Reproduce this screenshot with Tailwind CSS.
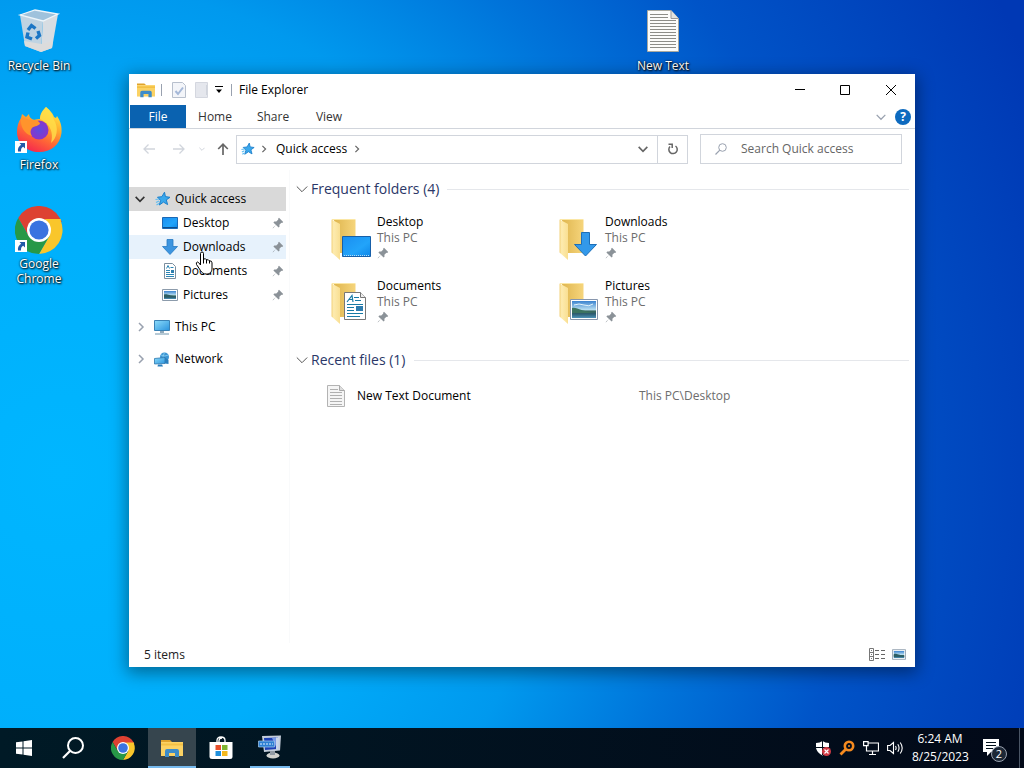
<!DOCTYPE html>
<html lang="en">
<head>
    <meta charset="UTF-8">
    <meta name="viewport" content="width=device-width, initial-scale=1.0">
    <title>File Explorer</title>
    <script src="https://cdn.jsdelivr.net/npm/@tailwindcss/browser@4"></script>
</head>
<body class="h-screen flex flex-col overflow-hidden cursor-default select-none font-['Open_Sans','Noto_Sans',sans-serif] text-[12px] leading-4 text-black">

    <!-- Shared icons -->
    <svg class="absolute size-0" aria-hidden="true">
        <defs>
            <linearGradient id="g-screen" x1="0" y1="0" x2="1" y2="1"><stop offset="0" stop-color="#1a8ef0"/><stop offset=".6" stop-color="#22a4fa"/><stop offset="1" stop-color="#0d86e8"/></linearGradient>
            <linearGradient id="g-monitor" x1="0" y1="0" x2="1" y2="1"><stop offset="0" stop-color="#8ddcfb"/><stop offset="1" stop-color="#2a93dd"/></linearGradient>
            <linearGradient id="g-flap" x1="0" x2="1"><stop offset="0" stop-color="#f3d27c"/><stop offset=".25" stop-color="#fdebaf"/><stop offset="1" stop-color="#f9df92"/></linearGradient>
            <linearGradient id="g-back" x1="0" x2="1"><stop offset="0" stop-color="#dfb64f"/><stop offset="1" stop-color="#f6d57c"/></linearGradient>
            <linearGradient id="g-sky" x1="0" y1="0" x2="0" y2="1"><stop offset="0" stop-color="#3b83cf"/><stop offset=".5" stop-color="#b5dcf0"/><stop offset=".6" stop-color="#3d6b5e"/><stop offset=".75" stop-color="#2c5b70"/><stop offset="1" stop-color="#4d93b8"/></linearGradient>
            <linearGradient id="g-fox" x1=".8" y1="0" x2=".3" y2="1"><stop offset="0" stop-color="#fff14a"/><stop offset=".35" stop-color="#ffb02e"/><stop offset=".65" stop-color="#ff6a35"/><stop offset="1" stop-color="#f5264f"/></linearGradient>
            <radialGradient id="g-globe"><stop offset="0" stop-color="#5d4be0"/><stop offset="1" stop-color="#8a35c9"/></radialGradient>
        </defs>
        <symbol id="chrome" viewBox="0 0 48 48">
            <path fill="#dd4132" d="M3.2 12A24 24 0 0 1 44.8 12L46.8 16H24L13.6 30Z"/>
            <path fill="#f9c62b" d="M45.8 15A24 24 0 0 1 24 48L34.4 30L30 13H45.8Z"/>
            <path fill="#279847" d="M24 48A24 24 0 0 1 3.2 12L13.6 30L24 35L34.4 30Z"/>
            <circle cx="24" cy="24" r="12" fill="#fff"/>
            <circle cx="24" cy="24" r="9.6" fill="#3a73e0"/>
        </symbol>
        <symbol id="shortcut" viewBox="0 0 12 12">
            <path fill="#fff" d="M0 0h12v12H0z"/>
            <path fill="#2359a8" d="M4.5 2h5.5v5.5L8.2 5.7C6.5 6.7 5.800 8 6 10.5H3C2.5 7.5 3.800 5.2 6.2 3.800Z"/>
        </symbol>
        <symbol id="star" viewBox="0 0 16 16">
            <path fill="#3aa8ec" stroke="#1c7fcb" d="M9.5 1.2 10.4 5.6 15 6.3 11.3 8.9 12.6 13.6 8.5 11.1 4.3 14 5.6 9.4 2.5 6.2 6.9 5.7Z"/>
            <path stroke="#5fbdf2" stroke-width="1.2" d="M.5 8.5 4 8M1 11.5l3-1.5M1.5 14 4 12.5"/>
        </symbol>
        <symbol id="pin" viewBox="0 0 12 12">
            <path fill="#8b9298" d="M7 .8 11.2 5l-1 .9-.8-.2-2 2 .1 2-.9.9L4 8 1.3 10.9.6 11.4l.5-.8L4 8 1.4 5.4l.9-.9 2 .1 2-2-.2-.9Z"/>
        </symbol>
        <symbol id="chev-down" viewBox="0 0 12 12"><path fill="none" stroke="currentColor" stroke-width="var(--w,1)" d="M.8 3.5 6 8.7l5.2-5.2"/></symbol>
        <symbol id="chev-right" viewBox="0 0 8 10"><path fill="none" stroke="currentColor" stroke-width="1.5" d="M2 1l4 4-4 4"/></symbol>
        <symbol id="desktop" viewBox="0 0 16 12">
            <path fill="url(#g-screen)" stroke="#1b68b5" d="M.5.5h15v11H.5z"/>
            <path stroke="#0c4d8a" d="M1 10.5h14"/>
        </symbol>
        <symbol id="down" viewBox="0 0 16 16"><path fill="#3d95e0" stroke="#2678c2" stroke-width=".8" d="M5 .5h6v7h4.5L8 15.5.5 7.5H5Z"/></symbol>
        <symbol id="doc" viewBox="0 0 14 16">
            <path fill="#fff" stroke="#7b8e9e" d="M1.5.5h8l3 3v12h-11z"/>
            <path fill="none" stroke="#2c86b5" d="M3.500 5.500 5 2.500l1.500 3M7.500 4.500h3M3 7.500h4M3 9.500h4M3 11.500h8M3 13.500h8"/>
            <path fill="#2f7fae" d="M8 7h3v3H8z"/>
        </symbol>
        <symbol id="picture" viewBox="0 0 16 12">
            <path fill="#fff" stroke="#8c9bab" d="M.5.5h15v11H.5z"/>
            <path fill="url(#g-sky)" d="M2 2h12v8H2z"/>
            <path fill="#2d5f64" d="M2 5.5c3-1 5 1 12 2V8.5H2z"/>
        </symbol>
        <symbol id="monitor" viewBox="0 0 16 15">
            <path fill="url(#g-monitor)" stroke="#3a82b5" d="M.5.5h15v10H.5z"/>
            <path fill="#8fa9bb" d="M6 11h4v2H6z"/><path stroke="#6f95ad" d="M1 14h14"/>
        </symbol>
        <symbol id="network" viewBox="0 0 16 15">
            <circle cx="10.5" cy="5" r="4.5" fill="#3c95d3"/>
            <path fill="none" stroke="#8dd2f2" stroke-width=".8" d="M7 3q4 2 7.5 0M10.5.5q-3 4 0 8"/>
            <path fill="url(#g-monitor)" stroke="#2d77ad" stroke-width=".8" d="M.5 6.5 11 5.5v6L.5 12Z"/>
            <path fill="#2b7fbd" d="M11 5.5 14.5 8v4L11 11.5ZM4 12.5h4l1 2H3.5Z"/>
        </symbol>
        <symbol id="folder-open" viewBox="0 0 28 42">
            <path fill="url(#g-back)" d="M4 2h21.5v33H8z"/>
            <path fill="url(#g-flap)" d="M1.5 1.5 10 6v36L1.5 34.5Z"/>
            <path fill="none" stroke="#fbe7a5" d="M2 1.5h23.5"/>
        </symbol>
        <symbol id="explorer" viewBox="0 0 22 18">
            <path fill="#e0a32c" d="M0 1h9l2 2H0z"/>
            <path fill="#fbd264" d="M0 3h22v14H0z"/>
            <path fill="#f3c044" d="M0 4.5h22v2H0z"/>
            <path fill="#3d8cc9" d="M4 18v-6q0-2 2-2h10q2 0 2 2v6h-4v-4H8v4z"/>
        </symbol>
        <symbol id="text-file" viewBox="0 0 18 22">
            <path fill="#f5f5f5" stroke="#b3b3b3" d="M.5.5h12l5 5v16H.5z"/>
            <path fill="#ddd" stroke="#a8a8a8" d="M12.5.5v5h5"/>
            <path stroke="#b0b0b0" d="M3 4.5h8M3 7.5h12M3 10.5h12M3 13.5h12M3 16.5h12M3 19.5h12"/>
        </symbol>
    </svg>

    <!-- Desktop -->
    <main class="relative flex-1 bg-[radial-gradient(circle_at_6%_65%,#00b6ff_0,#00aefb_300px,#0099ee_490px,#0074da_640px,#0054c8_790px,#0038b4_1050px)]">
        <ul class="w-[78px] pt-2 text-center leading-[15px] text-white [text-shadow:1px_1px_2px_#000,0_0_2px_#000]">
            <li class="h-[99px]">
                <svg class="mx-auto size-12" viewBox="0 0 48 48">
                    <path fill="#9fc2dc" d="M5 7 20 2 43 6 28 14Z"/>
                    <path fill="#bfd3e2" d="m5 7 23 6-2 31-16-6Z"/>
                    <path fill="#d8dde2" d="M28 13 43 6l-6 34-11 4Z"/>
                    <path fill="#dcdcdc" d="m9 33 17 3v8l-16-6zM26 36l12-3-1 7-11 4z"/>
                    <path fill="none" stroke="#edf5fa" stroke-width="1.3" d="M5 7 20 2l23 4-15 7Z"/>
                    <path fill="none" stroke="#1b76c5" stroke-width="3.4" d="m13 22 3.5-4.5 4 3M23 23l1.500 4.500-3.500 3M17 31l-5-2 1-4.500"/>
                </svg>
                <p class="mt-0.5">Recycle Bin</p>
            </li>
            <li class="h-[99px]">
                <div class="relative mx-auto size-12">
                    <svg class="size-12" viewBox="0 0 48 48">
                        <path fill="url(#g-fox)" d="M31 0c5 4 7 7 8 10l2 1 1-2c4 6 5 11 4.500 17C45 38 36 45 24 45S2 37 2 25c0-5 1-10 4-14l1-4 4 3 3-3c0 3 2 5 5 6 2-1 4-1 6-1C25 7 28 3 31 0Z"/>
                        <path fill="#ffe04a" opacity=".8" d="M31 0c5 5 7 9 8 13 5 8 3 18-3 23 2-7 1-15-5-20-2-2-4-3-6-4 0-5 3-9 6-12Z"/>
                        <circle cx="24" cy="23" r="9.5" fill="url(#g-globe)"/>
                        <path fill="#ff942c" d="M6 11c4 0 7 2 10 2 4-1 7 0 9 3 0 3-6 3-8 5-2 3-2 5 0 8C9 27 5 19 6 11Z"/>
                    </svg>
                    <svg class="absolute left-0 bottom-0.5 size-3"><use href="#shortcut"/></svg>
                </div>
                <p class="mt-0.5">Firefox</p>
            </li>
            <li>
                <div class="relative mx-auto size-12">
                    <svg class="size-12"><use href="#chrome"/></svg>
                    <svg class="absolute left-0 bottom-0.5 size-3"><use href="#shortcut"/></svg>
                </div>
                <p class="mt-0.5">Google<br>Chrome</p>
            </li>
        </ul>

        <div class="absolute left-[625px] top-2 w-[76px] text-center leading-[15px] text-white [text-shadow:1px_1px_2px_#000,0_0_2px_#000]">
            <svg class="mx-auto size-12" viewBox="0 0 48 48">
                <path fill="#fcfcfa" stroke="#a9a9a0" d="M8.500 2.500H32l7.500 8v33h-31z"/>
                <path fill="#e3e3de" stroke="#999" d="M32 2.500v8h7.500"/>
                <path stroke="#8d8d88" d="M11 6.500h18M11 9.500h18M11 12.500h26M11 15.500h26M11 18.500h26M11 21.500h26M11 24.500h26M11 27.500h26M11 30.500h26M11 33.500h26M11 36.500h26M11 39.500h26"/>
            </svg>
            <p class="mt-0.5">New Text</p>
        </div>

        <!-- Explorer window -->
        <section class="absolute left-[129px] right-[109px] top-[74px] bottom-[61px] flex flex-col bg-white shadow-[0_4px_16px_2px_rgba(0,0,0,0.4)]">
            <header class="flex h-[31px] items-center pl-2">
                <svg class="h-4 w-[18px]"><use href="#explorer"/></svg>
                <span class="ml-1.5 h-3 w-px bg-gray-400"></span>
                <button class="ml-2.5" aria-label="Properties">
                    <svg class="h-4 w-3.5" viewBox="0 0 14 16"><path fill="#f3f5f9" stroke="#b8c0cd" d="M.5.5h10l3 3v12H.5z"/><path fill="none" stroke="#a5b8d8" stroke-width="2" d="m3.500 9 2.500 3L11 5.500"/></svg>
                </button>
                <button class="ml-2" aria-label="New folder">
                    <svg class="h-4 w-4" viewBox="0 0 16 16"><path fill="#e5e7ed" stroke="#d4d7df" d="M1.500.5h12v15h-12z"/><path stroke="#d0d4dc" d="M12.500 3v10"/></svg>
                </button>
                <button class="ml-[5px]" aria-label="Customize toolbar">
                    <svg class="h-2 w-2" viewBox="0 0 8 8"><path d="M0 0h8v1H0zM1 3.500h6L4 7Z"/></svg>
                </button>
                <span class="ml-2 h-3 w-px bg-gray-400"></span>
                <h1 class="ml-[7px] flex-1">File Explorer</h1>
                <button class="flex h-full w-[45px] items-center justify-center" aria-label="Minimize"><svg class="size-[10px]" viewBox="0 0 10 10"><path stroke="#000" d="M0 4.500h10"/></svg></button>
                <button class="flex h-full w-[45px] items-center justify-center" aria-label="Maximize"><svg class="size-[10px]" viewBox="0 0 10 10"><path fill="none" stroke="#000" d="M.5.5h9v9h-9z"/></svg></button>
                <button class="flex h-full w-[48px] items-center justify-center" aria-label="Close"><svg class="size-[10px]" viewBox="0 0 10 10"><path stroke="#000" d="m0 0 10 10M10 0 0 10"/></svg></button>
            </header>

            <nav class="flex h-6 items-stretch border-b border-gray-300 pl-px text-[#333]">
                <button class="w-14 bg-[#0a62b0] text-white">File</button>
                <button class="w-[58px]">Home</button>
                <button class="w-[58px]">Share</button>
                <button class="w-[54px]">View</button>
                <button class="ml-auto text-gray-400" aria-label="Expand the ribbon"><svg class="h-3 w-2.5 [--w:1.5]"><use href="#chev-down"/></svg></button>
                <button class="mx-1 ml-[9px] self-center size-4 rounded-full bg-[#0d6abf] text-[12px] font-bold leading-4 text-white" aria-label="Help">?</button>
            </nav>

            <!-- Address bar -->
            <div class="flex h-[41px] items-center pr-[13px] pb-px">
                <button class="ml-[14px] text-gray-300" aria-label="Back"><svg class="size-3" viewBox="0 0 12 12"><path fill="none" stroke="currentColor" stroke-width="1.3" d="M12 6H1M5.500 1.500 1 6l4.500 4.500"/></svg></button>
                <button class="ml-[18px] text-gray-300" aria-label="Forward"><svg class="size-3" viewBox="0 0 12 12"><path fill="none" stroke="currentColor" stroke-width="1.3" d="M0 6h11M6.500 1.500 11 6l-4.500 4.500"/></svg></button>
                <button class="ml-[14px] text-gray-300" aria-label="Recent locations"><svg class="size-1.5 [--w:2]"><use href="#chev-down"/></svg></button>
                <button class="ml-3 text-[#666]" aria-label="Up"><svg class="size-3" viewBox="0 0 12 12"><path fill="none" stroke="currentColor" stroke-width="1.7" d="M6 12V1M1.200 6 6 1.200 10.800 6"/></svg></button>
                <div class="ml-[7px] flex h-[29px] min-w-0 flex-1 items-center border border-gray-300">
                    <svg class="ml-[3px] h-3.5 w-4"><use href="#star"/></svg>
                    <svg class="ml-1 h-2 w-2 text-[#666]"><use href="#chev-right"/></svg>
                    <button class="ml-2">Quick access</button>
                    <svg class="ml-1.5 h-2 w-2 text-[#666]"><use href="#chev-right"/></svg>
                    <button class="ml-auto mr-[9px] text-[#666]" aria-label="Previous locations"><svg class="size-2.5 [--w:2]"><use href="#chev-down"/></svg></button>
                    <button class="flex h-full w-[30px] items-center justify-center border-l border-gray-300 text-[#666]" aria-label="Refresh">
                        <svg class="size-3" viewBox="0 0 12 12"><path fill="none" stroke="currentColor" stroke-width="1.5" d="M3 3.500A4.200 4.200 0 1 0 8.500 3M1.500 1.200h3.700v3.700"/></svg>
                    </button>
                </div>
                <div class="ml-3 flex h-[30px] w-[202px] items-center border border-gray-300">
                    <svg class="ml-[14px] size-3 text-gray-400" viewBox="0 0 12 12"><circle cx="7.500" cy="4.500" r="3.800" fill="none" stroke="currentColor"/><path stroke="currentColor" stroke-width="1.2" d="M4.800 7.200.5 11.500"/></svg>
                    <input type="search" aria-label="Search Quick access" placeholder="Search Quick access" class="ml-3.5 min-w-0 flex-1 bg-transparent outline-none placeholder:text-[#666]">
                </div>
            </div>

            <div class="flex min-h-0 flex-1">
                <!-- Folder tree -->
                <aside class="w-[161px] shrink-0 pt-[17px] border-r border-gray-50">
                    <a href="#" class="flex h-6 w-[157px] items-center bg-[#d9d9d9] pl-1.5">
                        <svg class="size-[10px] text-[#333] [--w:2]"><use href="#chev-down"/></svg>
                        <svg class="ml-2.5 size-4"><use href="#star"/></svg>
                        <span class="ml-1">Quick access</span>
                    </a>
                    <a href="#" class="flex h-6 w-[157px] items-center pl-[33px]">
                        <svg class="h-3 w-4"><use href="#desktop"/></svg>
                        <span class="ml-[5px] flex-1">Desktop</span>
                        <svg class="mr-0.5 size-3"><use href="#pin"/></svg>
                    </a>
                    <a href="#" class="relative flex h-6 w-[157px] items-center bg-[#e7f2fc] pl-[33px]">
                        <svg class="size-4"><use href="#down"/></svg>
                        <span class="ml-[5px] flex-1">Downloads</span>
                        <svg class="mr-0.5 size-3"><use href="#pin"/></svg>
                        <!-- Mouse pointer -->
                        <svg class="absolute left-[66px] top-4 z-10 h-[24px] w-[18px]" viewBox="0 0 18 24">
                            <path fill="#fff" stroke="#000" stroke-linejoin="round" d="M5.500 13V2.500Q5.500 1 7 1t1.500 1.500V8q2.500-.8 3 .8 2.300-.5 2.800 1 2.700-.2 2.700 2V17c0 4-2 6-5.500 6-3 0-4.500-1-6-3.500l-4-6Q.8 11.300 2.300 11q1.200-.2 3.200 3Z"/>
                            <path stroke="#000" d="M8.500 7.500v5M11.500 8.500v4M14.500 9.500v3"/>
                        </svg>
                    </a>
                    <a href="#" class="flex h-6 w-[157px] items-center pl-[33px]">
                        <svg class="h-4 w-4"><use href="#doc"/></svg>
                        <span class="ml-[5px] flex-1">Documents</span>
                        <svg class="mr-0.5 size-3"><use href="#pin"/></svg>
                    </a>
                    <a href="#" class="flex h-6 w-[157px] items-center pl-[33px]">
                        <svg class="h-3 w-4"><use href="#picture"/></svg>
                        <span class="ml-[5px] flex-1">Pictures</span>
                        <svg class="mr-0.5 size-3"><use href="#pin"/></svg>
                    </a>
                    <a href="#" class="mt-2 flex h-6 w-[157px] items-center pl-2">
                        <svg class="h-2.5 w-2 text-gray-400"><use href="#chev-right"/></svg>
                        <svg class="ml-[9px] h-[15px] w-4"><use href="#monitor"/></svg>
                        <span class="ml-[5px]">This PC</span>
                    </a>
                    <a href="#" class="mt-2 flex h-6 w-[157px] items-center pl-2">
                        <svg class="h-2.5 w-2 text-gray-400"><use href="#chev-right"/></svg>
                        <svg class="ml-[9px] h-[15px] w-4"><use href="#network"/></svg>
                        <span class="ml-[5px]">Network</span>
                    </a>
                </aside>

                <!-- Folder contents -->
                <div class="min-w-0 flex-1 pl-1.5 pr-[6px] pt-[7px]">
                    <div class="flex h-6 items-center">
                        <svg class="size-3 text-[#555]"><use href="#chev-down"/></svg>
                        <h2 class="ml-[3px] text-[14px] leading-5 text-[#2b3768]">Frequent folders (4)</h2>
                        <span class="ml-2 h-px flex-1 bg-gray-200"></span>
                    </div>
                    <div class="mt-[13px] grid grid-cols-[228px_228px] gap-y-4 pl-[34px]">
                        <a href="#" class="flex h-12">
                            <div class="relative w-[47px] pt-1">
                                <svg class="h-[42px] w-7"><use href="#folder-open"/></svg>
                                <svg class="absolute left-3 top-[22px] h-[21px] w-[29px]" viewBox="0 0 29 21"><path fill="url(#g-screen)" stroke="#175fa8" d="M.5.5h28v20H.5z"/><path stroke="#b5dcf7" stroke-dasharray="1 1" d="M2 19.500h25"/></svg>
                            </div>
                            <div><p>Desktop</p><p class="text-[#6d6d6d]">This PC</p><svg class="mt-px size-3"><use href="#pin"/></svg></div>
                        </a>
                        <a href="#" class="flex h-12">
                            <div class="relative w-[47px] pt-1">
                                <svg class="h-[42px] w-7"><use href="#folder-open"/></svg>
                                <svg class="absolute left-4 top-[18px] h-[25px] w-[23px]" viewBox="0 0 23 25"><path fill="#3399ea" stroke="#1c6fb8" d="M7.500.5h8v12h7L11.500 24 .5 12.500h7Z"/></svg>
                            </div>
                            <div><p>Downloads</p><p class="text-[#6d6d6d]">This PC</p><svg class="mt-px size-3"><use href="#pin"/></svg></div>
                        </a>
                        <a href="#" class="flex h-12">
                            <div class="relative w-[47px] pt-1">
                                <svg class="h-[42px] w-7"><use href="#folder-open"/></svg>
                                <svg class="absolute left-3.5 top-[14px] h-[29px] w-[23px]" viewBox="0 0 23 29">
                                    <path fill="#fff" stroke="#777" d="M.5.5h16l5 5v22H.5z"/><path fill="#eee" stroke="#777" d="M16.500.5v5h5"/>
                                    <path fill="none" stroke="#187aa5" stroke-width="1.2" d="m3 10 5-6.500L9 10M5 7.500h4M10 5.500h5M11 8.500h6M3 12.500h16M3 15.500h7M3 18.500h7M3 21.500h16M3 24.500h13"/>
                                    <path fill="#2e7cae" d="M12 14h7v5h-7z"/>
                                </svg>
                            </div>
                            <div><p>Documents</p><p class="text-[#6d6d6d]">This PC</p><svg class="mt-px size-3"><use href="#pin"/></svg></div>
                        </a>
                        <a href="#" class="flex h-12">
                            <div class="relative w-[47px] pt-1">
                                <svg class="h-[42px] w-7"><use href="#folder-open"/></svg>
                                <svg class="absolute left-3 top-[21px] h-[21px] w-[28px]" viewBox="0 0 28 21">
                                    <path fill="#fff" stroke="#8796ad" d="M.5.5h27v20H.5z"/><path fill="url(#g-sky)" d="M2 2h24v17H2z"/>
                                    <path fill="#3b7360" d="M2 9c6-1 9 4 24 5H2z"/><path stroke="#e4f4fb" d="M4 6q5-2 10 0t9-1" fill="none"/>
                                </svg>
                            </div>
                            <div><p>Pictures</p><p class="text-[#6d6d6d]">This PC</p><svg class="mt-px size-3"><use href="#pin"/></svg></div>
                        </a>
                    </div>
                    <div class="mt-[22px] flex h-6 items-center">
                        <svg class="size-3 text-[#555]"><use href="#chev-down"/></svg>
                        <h2 class="ml-[3px] text-[14px] leading-5 text-[#2b3768]">Recent files (1)</h2>
                        <span class="ml-2 h-px flex-1 bg-gray-200"></span>
                    </div>
                    <a href="#" class="mt-3 flex h-6 items-center pl-[31px]">
                        <svg class="h-[22px] w-[18px]"><use href="#text-file"/></svg>
                        <span class="ml-3 w-[282px]">New Text Document</span>
                        <span class="text-[#6d6d6d]">This PC\Desktop</span>
                    </a>
                </div>
            </div>

            <footer class="flex h-6 items-center pl-[15px] pr-[9px] pb-0.5 text-[#222]">
                <p class="flex-1 pt-0.5">5 items</p>
                <button aria-label="Details view"><svg class="h-[13px] w-[17px]" viewBox="0 0 17 13"><path fill="none" stroke="#777" d="M.5.5h4v12h-4zM.5 4.500h4M.5 8.500h4"/><path stroke="#666" stroke-dasharray="4 2" d="M6 2.500h11M6 6.500h11M6 10.500h11"/><path stroke="#777" d="M2 2.500h1M2 6.500h1M2 10.500h1"/></svg></button>
                <button class="ml-1.5" aria-label="Large icons view"><svg class="h-[11px] w-3.5"><use href="#picture"/></svg></button>
            </footer>
        </section>
    </main>

    <!-- Taskbar -->
    <footer class="flex h-10 shrink-0 items-stretch bg-linear-to-r from-[#001a26] to-[#020918] text-white">
        <div class="flex gap-px">
            <button class="flex w-[47px] items-center justify-center" aria-label="Start"><svg class="size-4" viewBox="0 0 16 16"><path fill="#fff" d="m0 2.300 6.500-.9v6.100H0zM7.500 1.200 16 0v7.500H7.500zM0 8.500h6.500v6.100L0 13.700zM7.500 8.500H16V16l-8.500-1.200z"/></svg></button>
            <button class="flex w-[50px] items-center justify-center" aria-label="Search"><svg class="size-[22px]" viewBox="0 0 22 22"><circle cx="13.500" cy="8.500" r="7.500" fill="none" stroke="#fff" stroke-width="2"/><path stroke="#fff" stroke-width="2.200" d="M8.200 13.800 1 21"/></svg></button>
            <button class="flex w-12 items-center justify-center" aria-label="Google Chrome"><svg class="size-6"><use href="#chrome"/></svg></button>
            <button class="flex w-12 items-center justify-center border-b-2 border-[#76b9ed] bg-[#36454e] pt-0.5" aria-label="File Explorer"><svg class="h-[18px] w-[22px]"><use href="#explorer"/></svg></button>
            <button class="flex w-12 items-center justify-center" aria-label="Microsoft Store">
                <svg class="h-6 w-6" viewBox="0 0 24 24"><path fill="none" stroke="#fff" stroke-width="1.300" d="M8 7V4.500Q8 1 12 1t4 3.500V7M10 7V5q0-3 3-3"/><path fill="#fff" d="M.5 6h23v14.500q0 2.500-2.500 2.500H3Q.5 23 .5 20.500z"/><path fill="#e8502c" d="M6.500 9H12v5H6.500z"/><path fill="#7fb432" d="M13 9h5.500v5H13z"/><path fill="#2090dc" d="M6.500 15H12v5H6.500z"/><path fill="#f4b81c" d="M13 15h5.500v5H13z"/></svg>
            </button>
            <button class="flex w-12 flex-col items-center" aria-label="Run">
                <svg class="mt-1.5 h-7 w-6" viewBox="0 0 24 28"><path fill="#c5cedb" d="m4 2 19-.5-1 15L6 18Z"/><path fill="#1c40b4" d="m6 4 14-.5-1 11.500-12 1z"/><path fill="#7799e8" d="m14 4 6-.5-1 11.500z"/><path fill="#c8d6ec" d="M18 3.500h3l-1 12h-2z"/><path fill="#2d80d3" stroke="#a7ccee" stroke-width=".7" d="M.5 7h16v6H.5z"/><path stroke="#e4f0ff" stroke-dasharray="2 1" d="M2 10h13"/><ellipse cx="15" cy="21.500" rx="6.500" ry="3" fill="#d3d3cf"/><path fill="#929ba5" d="M12 17h5v4h-5z"/></svg>
                <span class="mt-auto h-0.5 w-10 bg-[#76b9ed]"></span>
            </button>
        </div>

        <div class="ml-auto flex items-center">
            <button aria-label="Windows Security"><svg class="size-4" viewBox="0 0 16 16"><path fill="#fff" d="M1 3q4 0 6.500-2Q10 3 14 3v5q-1 5-6.500 7.500Q2 13 1 8z"/><path stroke="#020d19" d="M7.500 1v14M1 7.500h13"/><circle cx="11.500" cy="11.500" r="4.500" fill="#d13b45"/><path stroke="#fff" stroke-width="1.200" d="m9.500 9.500 4 4M13.500 9.500l-4 4"/></svg></button>
            <button class="ml-2" aria-label="Key manager"><svg class="size-4" viewBox="0 0 16 16"><circle cx="10" cy="6" r="4.200" fill="none" stroke="#f58a1f" stroke-width="2.600"/><path stroke="#f58a1f" stroke-width="2.800" d="M7 9 1.500 14.500"/><circle cx="10" cy="6" r="1" fill="#f58a1f"/></svg></button>
            <button class="ml-2" aria-label="Network status"><svg class="size-4" viewBox="0 0 16 16"><path fill="none" stroke="#fff" stroke-width="1.200" d="M5.500 3h10v8H3.500V6M9.500 11v3.500M6 14.500h7M.6 1.600h4.500v4H.6z"/></svg></button>
            <button class="ml-2" aria-label="Volume"><svg class="h-4 w-[17px]" viewBox="0 0 17 16"><path fill="none" stroke="#fff" stroke-width="1.100" d="M.6 5.500H3l3.500-3v11l-3.500-3H.6zM8.500 6q1.200 2 0 4M10.800 4.200q2.500 3.800 0 7.600M13.200 2.500q4 5.500 0 11"/></svg></button>
            <button class="ml-2 w-[56px] text-center leading-[18px]"><time datetime="2023-08-25T06:24">6:24 AM<br>8/25/2023</time></button>
            <button class="relative ml-[15px] mr-3 flex h-10 w-6 items-center" aria-label="2 notifications">
                <svg class="h-5 w-4" viewBox="0 0 16 20"><path fill="#fff" d="M0 1h16v13H8l-4 4v-4H0z"/><path stroke="#02101c" d="M3 4.500h10M3 7.500h10M3 10.500h7"/></svg>
                <span class="absolute left-2 top-[18px] size-4 rounded-full border border-gray-400 bg-[#1d2836] text-[11px] leading-[14px]">2</span>
            </button>
            <span class="mr-1 h-full w-px bg-gray-600"></span>
        </div>
    </footer>
</body>
</html>
